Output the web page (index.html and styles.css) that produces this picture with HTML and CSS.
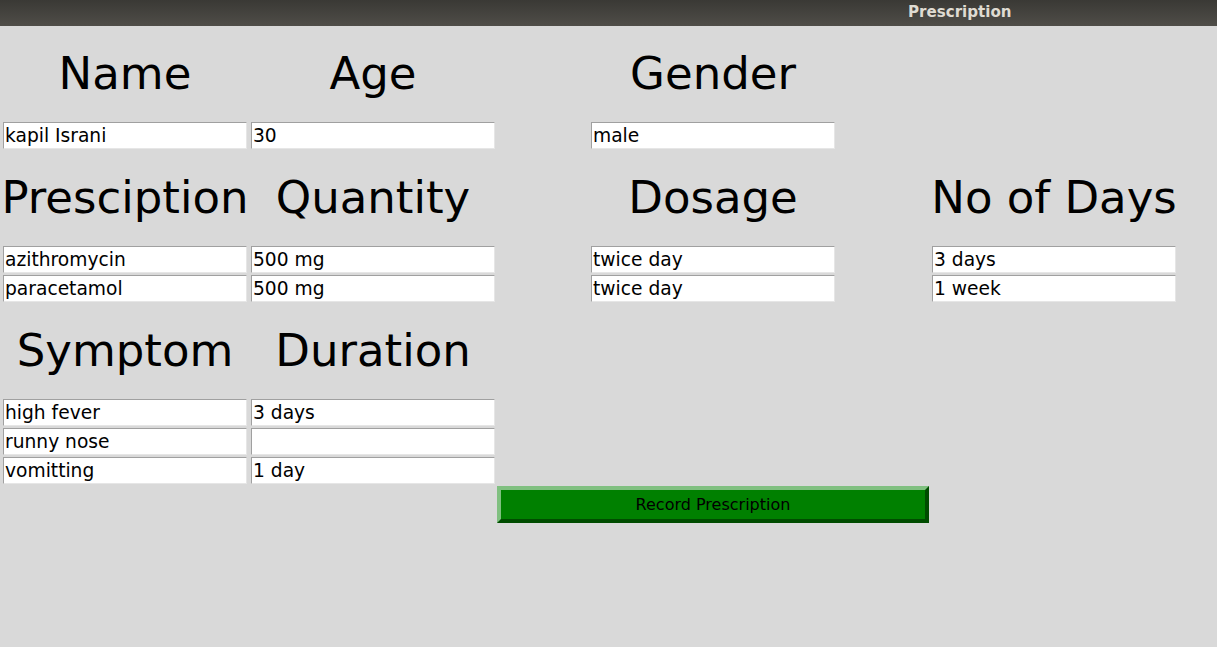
FILE: index.html
```html
<!DOCTYPE html>
<html>
<head>
<meta charset="utf-8">
<title>Prescription</title>
<link rel="stylesheet" href="styles.css">
</head>
<body>
<div class="titlebar"><span class="title">Prescription</span></div>
<div class="form">
  <div class="lbl c0 r1">Name</div>
  <div class="lbl c1 r1">Age</div>
  <div class="lbl c3 r1">Gender</div>

  <div class="ent c0 r2">kapil Israni</div>
  <div class="ent c1 r2">30</div>
  <div class="ent c3 r2">male</div>

  <div class="lbl c0 r3">Presciption</div>
  <div class="lbl c1 r3">Quantity</div>
  <div class="lbl c3 r3">Dosage</div>
  <div class="lbl c4 r3">No of Days</div>

  <div class="ent c0 r4">azithromycin</div>
  <div class="ent c1 r4">500 mg</div>
  <div class="ent c3 r4">twice day</div>
  <div class="ent c4 r4">3 days</div>

  <div class="ent c0 r5">paracetamol</div>
  <div class="ent c1 r5">500 mg</div>
  <div class="ent c3 r5">twice day</div>
  <div class="ent c4 r5">1 week</div>

  <div class="lbl c0 r6">Symptom</div>
  <div class="lbl c1 r6">Duration</div>

  <div class="ent c0 r7">high fever</div>
  <div class="ent c1 r7">3 days</div>

  <div class="ent c0 r8">runny nose</div>
  <div class="ent c1 r8"></div>

  <div class="ent c0 r9">vomitting</div>
  <div class="ent c1 r9">1 day</div>

  <button class="btn c3 r10">Record Prescription</button>
</div>
</body>
</html>
```
FILE: styles.css
```css
html, body {
  margin: 0;
  padding: 0;
  background: #d9d9d9;
  height: 100%;
  overflow: hidden;
}
body {
  font-family: "DejaVu Sans", sans-serif;
  color: #000;
}
.titlebar {
  height: 26px;
  background: linear-gradient(#3a3935, #4f4d48);
  position: relative;
}
.title {
  position: absolute;
  left: 908px;
  top: 2px;
  font-family: "DejaVu Sans", sans-serif;
  font-weight: bold;
  font-size: 15.1px;
  line-height: 20px;
  color: #dfdbd2;
}
.form {
  display: grid;
  grid-template-columns: 248px 248px 432px 250px;
  padding-left: 1px;
}
.c0 { grid-column: 1; }
.c1 { grid-column: 2; }
.c3 { grid-column: 3; }
.c4 { grid-column: 4; }
.r1 { grid-row: 1; }
.r2 { grid-row: 2; }
.r3 { grid-row: 3; }
.r4 { grid-row: 4; }
.r5 { grid-row: 5; }
.r6 { grid-row: 6; }
.r7 { grid-row: 7; }
.r8 { grid-row: 8; }
.r9 { grid-row: 9; }
.r10 { grid-row: 10; }
.lbl {
  height: 95px;
  display: flex;
  align-items: center;
  justify-content: center;
  font-size: 45px;
  line-height: 56px;
  white-space: nowrap;
}
.ent {
  box-sizing: border-box;
  width: 244px;
  height: 27px;
  margin: 1px 2px;
  background: #fff;
  border: 1px solid;
  border-color: #a0a0a0 #e6e6e6 #e6e6e6 #a0a0a0;
  font-size: 18.67px;
  line-height: 25px;
  padding-left: 1px;
  white-space: nowrap;
  overflow: hidden;
  justify-self: start;
}
.ent.c3 { justify-self: center; margin: 1px 0; }
.ent.c4 { margin-left: 3px; }
.btn {
  box-sizing: border-box;
  width: 432px;
  height: 37px;
  margin-top: 1px;
  background: #008000;
  border: 4px solid;
  border-color: #80c080 #004c00 #004c00 #80c080;
  font-family: "DejaVu Sans", sans-serif;
  font-size: 16px;
  color: #000;
  padding: 0;
  line-height: 27px;
}
```
